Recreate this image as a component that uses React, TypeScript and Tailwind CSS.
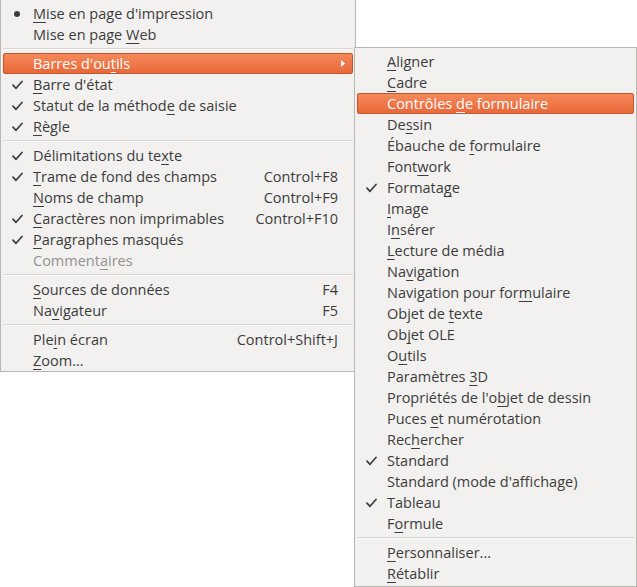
import React from 'react'

type Item =
  | 'sep'
  | {
      label: string
      mark?: 'check' | 'radio'
      shortcut?: string
      active?: boolean
      disabled?: boolean
      submenu?: boolean
    }

const viewMenu: Item[] = [
  { label: "&Mise en page d'impression", mark: 'radio' },
  { label: 'Mise en page &Web' },
  'sep',
  { label: "Barres d'ou&tils", active: true, submenu: true },
  { label: "&Barre d'état", mark: 'check' },
  { label: 'Statut de la méthod&e de saisie', mark: 'check' },
  { label: '&Règle', mark: 'check' },
  'sep',
  { label: 'Délimitations du te&xte', mark: 'check' },
  { label: '&Trame de fond des champs', mark: 'check', shortcut: 'Control+F8' },
  { label: '&Noms de champ', shortcut: 'Control+F9' },
  { label: '&Caractères non imprimables', mark: 'check', shortcut: 'Control+F10' },
  { label: '&Paragraphes masqués', mark: 'check' },
  { label: 'Comment&aires', disabled: true },
  'sep',
  { label: '&Sources de données', shortcut: 'F4' },
  { label: 'Na&vigateur', shortcut: 'F5' },
  'sep',
  { label: 'Ple&in écran', shortcut: 'Control+Shift+J' },
  { label: '&Zoom...' },
]

const toolbarMenu: Item[] = [
  { label: '&Aligner' },
  { label: '&Cadre' },
  { label: 'Contrôles &de formulaire', active: true },
  { label: 'De&ssin' },
  { label: 'Ébauche de &formulaire' },
  { label: 'Font&work' },
  { label: 'Formata&ge', mark: 'check' },
  { label: '&Image' },
  { label: 'I&nsérer' },
  { label: '&Lecture de média' },
  { label: 'Na&vigation' },
  { label: 'Navigation pour for&mulaire' },
  { label: 'Objet de &texte' },
  { label: 'Ob&jet OLE' },
  { label: 'O&utils' },
  { label: 'Paramètres &3D' },
  { label: "Propriétés de l'o&bjet de dessin" },
  { label: 'Puces &et numérotation' },
  { label: 'Rec&hercher' },
  { label: 'Standard', mark: 'check' },
  { label: "Standard (mode d'affichage)" },
  { label: 'Tableau', mark: 'check' },
  { label: 'F&ormule' },
  'sep',
  { label: '&Personnaliser...' },
  { label: '&Rétablir' },
]

// "&" marks the mnemonic letter
function Label({ text }: { text: string }) {
  const i = text.indexOf('&')
  if (i < 0) return <span>{text}</span>
  return (
    <span>
      {text.slice(0, i)}
      <u className="underline decoration-1 underline-offset-[3px]">{text[i + 1]}</u>
      {text.slice(i + 2)}
    </span>
  )
}

function Check() {
  return (
    <svg width="11" height="10" viewBox="0 0 11 10" fill="none">
      <path d="M1 5.2 L4 8.3 L10 1.5" stroke="currentColor" strokeWidth="1.7" strokeLinecap="round" strokeLinejoin="round" />
    </svg>
  )
}

function Menu({ items }: { items: Item[] }) {
  return (
    <>
      {items.map((it, idx) => {
        if (it === 'sep')
          return (
            <div key={idx} className="h-[8px] flex items-center px-[2px]">
              <div className="w-full h-[2px] border-t border-[#d8d4cf] border-b border-b-[#faf9f8]" />
            </div>
          )
        const color = it.active ? 'text-white' : it.disabled ? 'text-[#929292]' : 'text-[#3c3c3c]'
        return (
          <div
            key={idx}
            className={`h-[21px] mx-[2px] flex items-center border rounded-[2px] ${
              it.active
                ? 'bg-gradient-to-b from-[#f5895a] to-[#e9683a] border-[#c4562c]'
                : 'border-transparent'
            } ${color}`}
          >
            <div className="w-[29px] pl-[8px] flex items-center shrink-0">
              {it.mark === 'check' && <Check />}
              {it.mark === 'radio' && <div className="w-[6px] h-[6px] rounded-full bg-[#3c3c3c] ml-[2px]" />}
            </div>
            <div className="flex-1 whitespace-nowrap pt-[2px]">
              <Label text={it.label} />
            </div>
            {it.shortcut && <div className="pr-[14px] pt-[2px] whitespace-nowrap">{it.shortcut}</div>}
            {it.submenu && (
              <div className="pr-[7px]">
                <svg width="4" height="7" viewBox="0 0 4 7">
                  <path d="M0 0 L4 3.5 L0 7 Z" fill="#ffffff" />
                </svg>
              </div>
            )}
          </div>
        )
      })}
    </>
  )
}

export default function App() {
  return (
    <div className="relative w-[637px] h-[587px] bg-white overflow-hidden font-['Open_Sans',sans-serif] text-[14.5px] leading-none">
      <div className="w-[356px] bg-[#f2f1f0] border-x border-b border-[#b9b5b0] pt-[3px]">
        <Menu items={viewMenu} />
      </div>

      <div className="absolute left-[354px] top-[47px] w-[283px] bg-[#f2f1f0] border border-[#b9b5b0] pt-[3px] pb-[2px]">
        <Menu items={toolbarMenu} />
      </div>
    </div>
  )
}
